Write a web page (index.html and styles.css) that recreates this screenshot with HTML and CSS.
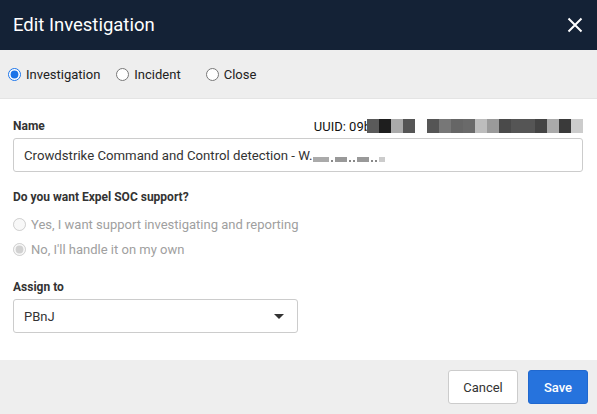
FILE: index.html
```html
<!DOCTYPE html>
<html lang="en">
<head>
    <meta charset="UTF-8">
    <meta name="viewport" content="width=device-width, initial-scale=1.0">
    <title>Edit Investigation</title>
    <link rel="stylesheet" href="styles.css">
</head>
<body>

    <div class="dialog">
        <!-- Title bar -->
        <header class="dialog-header">
            <h1>Edit Investigation</h1>
            <button class="close-btn" type="button" aria-label="Close">
                <svg width="16" height="16" viewBox="0 0 16 16">
                    <path d="M1.5 1.5 L14.5 14.5 M14.5 1.5 L1.5 14.5" stroke="#fff" stroke-width="2" fill="none"/>
                </svg>
            </button>
        </header>

        <!-- Type switch -->
        <div class="type-bar">
            <label class="type-option"><input type="radio" name="type" checked> Investigation</label>
            <label class="type-option"><input type="radio" name="type"> Incident</label>
            <label class="type-option close-option"><input type="radio" name="type"> Close</label>
        </div>

        <!-- Form -->
        <div class="dialog-body">
            <div class="field-head">
                <label class="field-label" for="name">Name</label>
                <span class="uuid">UUID: 09b<span class="redact">
                    <i style="background:#5a5a5a"></i><i style="background:#1e1e1e"></i><i style="background:#aaaaaa"></i><i style="background:#555555"></i><i style="background:#fdfdfd"></i><i style="background:#555555"></i><i style="background:#777777"></i><i style="background:#666666"></i><i style="background:#6a6a6a"></i><i style="background:#bdbdbd"></i><i style="background:#9a9a9a"></i><i style="background:#4a4a4a"></i><i style="background:#555555"></i><i style="background:#555555"></i><i style="background:#444444"></i><i style="background:#aaaaaa"></i><i style="background:#3a3a3a"></i><i style="background:#cccccc"></i>
                </span></span>
            </div>
            <div class="text-input" id="name">Crowdstrike Command and Control detection - W.<span class="smudge">
                <i style="width:16px;background:#aaa"></i><i class="dot"></i><i style="width:12px;background:#999"></i><i class="dot"></i><i class="dot"></i><i style="width:12px;background:#999"></i><i class="dot"></i><i class="dot"></i><i style="width:6px;background:#ccc"></i>
            </span></div>

            <p class="question">Do you want Expel SOC support?</p>
            <label class="support-option"><input type="radio" name="support" disabled> Yes, I want support investigating and reporting</label>
            <label class="support-option"><input type="radio" name="support" checked disabled> No, I'll handle it on my own</label>

            <label class="field-label assign-label" for="assignee">Assign to</label>
            <div class="select" id="assignee">
                <span>PBnJ</span>
                <span class="caret"></span>
            </div>
        </div>

        <!-- Actions -->
        <footer class="dialog-footer">
            <button class="btn btn-cancel" type="button">Cancel</button>
            <button class="btn btn-save" type="button">Save</button>
        </footer>
    </div>

</body>
</html>
```

FILE: styles.css
```css
body {
    margin: 0;
    font-family: 'Roboto', 'Liberation Sans', sans-serif;
    background-color: #ffffff;
    color: #333;
}

.dialog {
    width: 597px;
    height: 414px;
    display: flex;
    flex-direction: column;
    background: #ffffff;
}

/* Header */
.dialog-header {
    height: 50px;
    flex-shrink: 0;
    background: #142236;
    display: flex;
    align-items: center;
    justify-content: space-between;
    padding: 0 14px 0 13px;
}

.dialog-header h1 {
    margin: 0;
    font-size: 18.5px;
    font-weight: 400;
    color: #ffffff;
}

.close-btn {
    background: none;
    border: none;
    padding: 0;
    width: 16px;
    height: 16px;
    cursor: pointer;
}

/* Type switch */
.type-bar {
    height: 48px;
    flex-shrink: 0;
    background: #eeeeee;
    border-bottom: 1px solid #e4e4e4;
    display: flex;
    align-items: center;
    padding: 0 8px;
    font-size: 13px;
    color: #222;
}

.type-option {
    display: flex;
    align-items: center;
    margin-right: 16px;
}

.type-option.close-option {
    margin-left: 9px;
}

input[type="radio"] {
    width: 13px;
    height: 13px;
    margin: 0 5px 0 0;
    accent-color: #1a73e8;
}

/* Body */
.dialog-body {
    flex: 1;
    padding: 17px 14px 0 13px;
}

.field-head {
    display: flex;
    justify-content: space-between;
    align-items: center;
    height: 20px;
}

.field-label {
    display: block;
    font-size: 12px;
    font-weight: 700;
    color: #333;
}

.uuid {
    display: flex;
    align-items: center;
    font-size: 13px;
    color: #111;
}

.redact {
    display: flex;
    margin-left: -4px;
}

.redact i {
    display: block;
    width: 12px;
    height: 14px;
}

.text-input {
    margin-top: 2px;
    height: 32px;
    border: 1px solid #cccccc;
    border-radius: 3px;
    display: flex;
    align-items: center;
    padding: 0 10px;
    font-size: 13.2px;
    color: #333;
}

.smudge {
    display: flex;
    align-items: flex-end;
    height: 10px;
    margin-top: 4px;
}

.smudge i {
    display: block;
    height: 5px;
    margin-right: 2px;
}

.smudge i.dot {
    width: 2px;
    height: 2px;
    background: #888;
}

.question {
    margin: 18px 0 8px;
    font-size: 12px;
    font-weight: 700;
    color: #333;
}

.support-option {
    display: flex;
    align-items: center;
    height: 25px;
    font-size: 13px;
    color: #a0a0a0;
}

.assign-label {
    margin-top: 15px;
    height: 20px;
    line-height: 20px;
}

.select {
    margin-top: 2px;
    height: 32px;
    border: 1px solid #cccccc;
    border-radius: 3px;
    display: flex;
    align-items: center;
    justify-content: space-between;
    padding: 0 13px 0 10px;
    box-sizing: content-box;
    width: 260px;
    font-size: 13px;
    color: #333;
}

.caret {
    width: 0;
    height: 0;
    border-left: 5px solid transparent;
    border-right: 5px solid transparent;
    border-top: 5px solid #333;
}

/* Footer */
.dialog-footer {
    height: 54px;
    flex-shrink: 0;
    background: #eeeeee;
    display: flex;
    align-items: center;
    justify-content: flex-end;
    padding: 0 9px 0 0;
    gap: 10px;
}

.btn {
    height: 34px;
    border-radius: 3px;
    font-family: 'Roboto', 'Liberation Sans', sans-serif;
    font-size: 13px;
    cursor: pointer;
}

.btn-cancel {
    width: 70px;
    background: #ffffff;
    border: 1px solid #cccccc;
    color: #333;
}

.btn-save {
    width: 60px;
    background: #2673dd;
    border: 1px solid #2068cf;
    color: #ffffff;
    font-weight: 500;
}
```
